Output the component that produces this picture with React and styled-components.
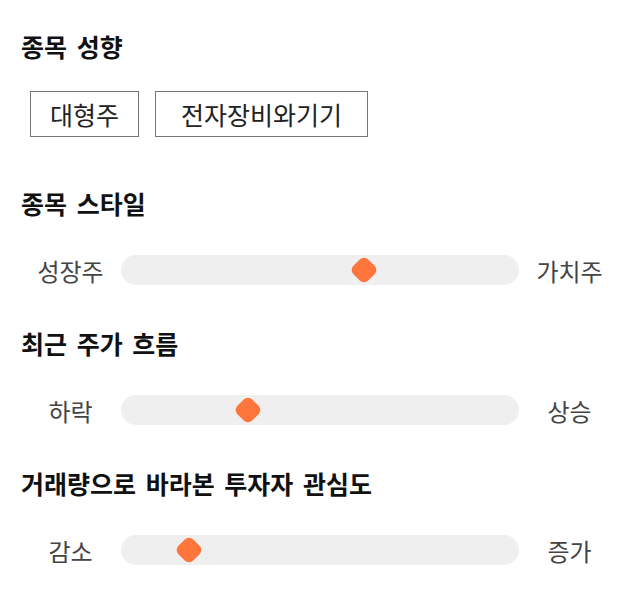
import React from "react";
import styled, { createGlobalStyle } from "styled-components";

const Global = createGlobalStyle`
  html, body { margin: 0; padding: 0; background: #fff; }
  body { font-family: "Noto Sans CJK KR", "Noto Sans", sans-serif; color: #111; }
`;

const Page = styled.div`
  width: 640px;
  padding: 31px 20px 0;
  box-sizing: border-box;
`;

const Section = styled.section`
  margin-top: ${(p) => p.$gap}px;
`;

const Heading = styled.h2`
  margin: 0;
  font-size: 25px;
  line-height: 30px;
  height: 30px;
  font-weight: 700;
  color: #111;
  padding-left: 1px;
  word-spacing: 4px;
  white-space: nowrap;
`;

const Chips = styled.div`
  display: flex;
  gap: 16px;
  margin-top: 30px;
  padding-left: 10px;
`;

const Chip = styled.div`
  height: 46px;
  box-sizing: border-box;
  border: 1px solid #777;
  padding: 0 ${(p) => p.$pad}px;
  display: flex;
  align-items: center;
  font-size: 25px;
  color: #222;
`;

const SliderRow = styled.div`
  display: flex;
  align-items: center;
  height: 30px;
  margin-top: 37px;
`;

const Label = styled.div`
  width: 101px;
  text-align: center;
  font-size: 24px;
  color: #444;
  flex-shrink: 0;
`;

const Track = styled.div`
  position: relative;
  flex: 1;
  height: 30px;
  border-radius: 15px;
  background: #efefef;
`;

const Thumb = styled.div`
  position: absolute;
  top: 50%;
  width: 21px;
  height: 21px;
  background: #ff763c;
  border-radius: 6px;
  transform: translate(-50%, -50%) rotate(45deg);
`;

const chips = [
  { label: "대형주", pad: 19 },
  { label: "전자장비와기기", pad: 25 },
];

const sliders = [
  { title: "종목 스타일", left: "성장주", right: "가치주", pos: 243, gap: 51 },
  { title: "최근 주가 흐름", left: "하락", right: "상승", pos: 127, gap: 43 },
  { title: "거래량으로 바라본 투자자 관심도", left: "감소", right: "증가", pos: 68, gap: 43 },
];

export default function App() {
  return (
    <>
      <Global />
      <Page>
        <Section $gap={0}>
          <Heading>종목 성향</Heading>
          <Chips>
            {chips.map((c) => (
              <Chip key={c.label} $pad={c.pad}>{c.label}</Chip>
            ))}
          </Chips>
        </Section>
        {sliders.map((s) => (
          <Section key={s.title} $gap={s.gap}>
            <Heading>{s.title}</Heading>
            <SliderRow>
              <Label>{s.left}</Label>
              <Track>
                <Thumb style={{ left: s.pos }} />
              </Track>
              <Label>{s.right}</Label>
            </SliderRow>
          </Section>
        ))}
      </Page>
    </>
  );
}
